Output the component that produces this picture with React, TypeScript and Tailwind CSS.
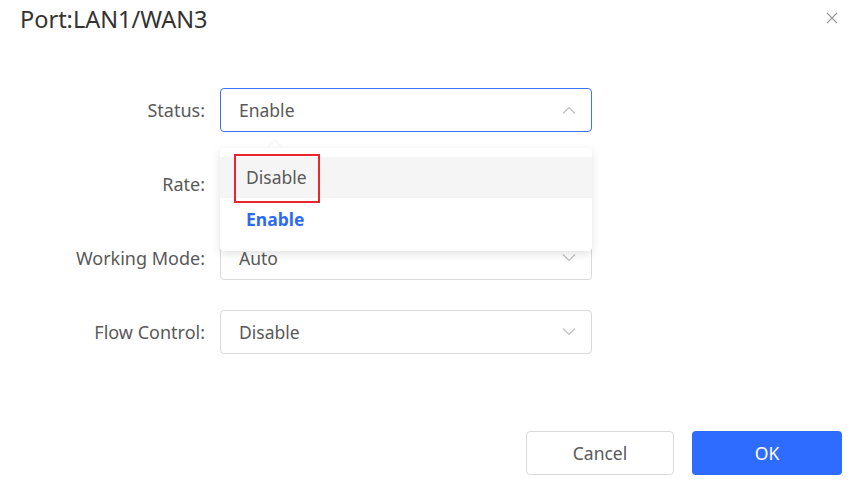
import React from "react";

const Chevron = ({ up = false }: { up?: boolean }) => (
  <svg width="14" height="8" viewBox="0 0 14 8" fill="none" className="shrink-0">
    <path
      d={up ? "M1 7.5L7 1.5L13 7.5" : "M1 0.5L7 6.5L13 0.5"}
      stroke="#bfbfbf"
      strokeWidth="1.2"
    />
  </svg>
);

const Row = ({
  label,
  value,
  focused = false,
  children,
}: {
  label: string;
  value: string;
  focused?: boolean;
  children?: React.ReactNode;
}) => (
  <div className="flex items-center h-[44px]">
    <div className="w-[205px] text-right text-[18px] text-[#595959]">{label}</div>
    <div className="relative ml-[15px]">
      <div
        className={
          "w-[372px] h-[44px] rounded-[4px] border flex items-center justify-between pl-[18px] pr-[15px] bg-white " +
          (focused ? "border-[#3b73f6]" : "border-[#d9d9d9]")
        }
      >
        <span className="text-[17.5px] text-[#595959]">{value}</span>
        <Chevron up={focused} />
      </div>
      {children}
    </div>
  </div>
);

export default function App() {
  return (
    <div
      className="w-[863px] h-[498px] bg-white flex flex-col relative"
      style={{ fontFamily: '"Noto Sans", "Open Sans", sans-serif' }}
    >
      <div className="flex items-start justify-between pl-[20px] pr-[25px] pt-[3px] h-[88px]">
        <div className="text-[23.5px] text-[#333] leading-[32px]">Port:LAN1/WAN3</div>
        <svg width="12" height="12" viewBox="0 0 12 12" className="mt-[9px]">
          <path d="M1 1L11 11M11 1L1 11" stroke="#9a9a9a" strokeWidth="1.2" />
        </svg>
      </div>
      <div className="flex flex-col gap-[30px]">
        <Row label="Status:" value="Enable" focused>
          <div className="absolute left-0 top-[60px] w-[372px] z-10">
            <div className="absolute left-[50px] top-[-5px] w-[10px] h-[10px] bg-white rotate-45 shadow-[-1px_-1px_2px_rgba(0,0,0,0.05)]" />
            <div className="relative bg-white rounded-[4px] shadow-[0_3px_10px_rgba(0,0,0,0.12)] pt-[9px] pb-[11px]">
              <div className="h-[41px] bg-[#f5f5f5] flex items-center pl-[26px] text-[17.5px] text-[#595959]">
                Disable
              </div>
              <div className="h-[42px] flex items-center pl-[26px] text-[17.5px] font-bold text-[#2e6bf5]">
                Enable
              </div>
              <div className="absolute left-[14px] top-[6px] w-[86px] h-[49px] border-2 border-[#e8262b]" />
            </div>
          </div>
        </Row>
        <Row label="Rate:" value="" />
        <Row label="Working Mode:" value="Auto" />
        <Row label="Flow Control:" value="Disable" />
      </div>
      <div className="flex-1" />
      <div className="flex justify-end gap-[18px] pr-[21px] pb-[23px]">
        <button className="w-[148px] h-[44px] rounded-[4px] border border-[#d9d9d9] bg-white text-[17.5px] text-[#595959]">
          Cancel
        </button>
        <button className="w-[150px] h-[44px] rounded-[4px] bg-[#2e6bff] text-[17.5px] text-white">
          OK
        </button>
      </div>
    </div>
  );
}
